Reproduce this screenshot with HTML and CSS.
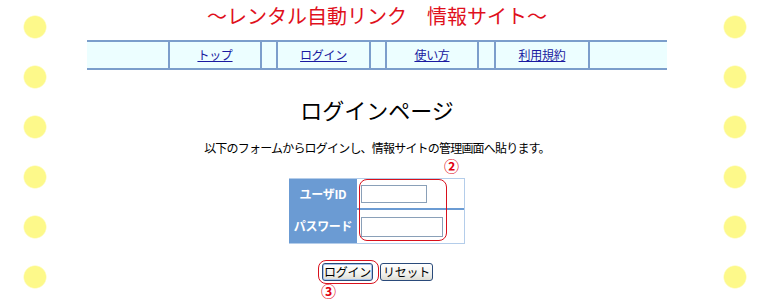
FILE: index.html
```html
<!DOCTYPE html>
<html lang="ja">
<head>
<meta charset="utf-8">
<title>ログインページ</title>
<link rel="stylesheet" href="styles.css">
</head>
<body>
<div class="page">
  <h2 class="site-title">〜レンタル自動リンク　情報サイト〜</h2>
  <nav class="nav">
    <div class="cell c1"></div>
    <div class="cell c2 sep"><a href="#">トップ</a></div>
    <div class="cell gap sep"></div>
    <div class="cell c3 sep"><a href="#">ログイン</a></div>
    <div class="cell gap sep"></div>
    <div class="cell c4 sep"><a href="#">使い方</a></div>
    <div class="cell gap2 sep"></div>
    <div class="cell c5 sep"><a href="#">利用規約</a></div>
    <div class="cell c6 sep"></div>
  </nav>
  <h1 class="page-title">ログインページ</h1>
  <p class="lead">以下のフォームからログインし、情報サイトの管理画面へ貼ります。</p>
  <form class="form">
    <div class="form-area">
      <div class="form-table">
        <div class="th th1">ユーザID</div>
        <div class="td td1"><input class="in in1" type="text"></div>
        <div class="th th2">パスワード</div>
        <div class="td td2"><input class="in in2" type="password"></div>
      </div>
      <span class="mark-box mark-inputs"></span>
      <span class="num num2">②</span>
    </div>
    <div class="buttons">
      <span class="btn-wrap">
        <button type="button" class="btn btn-login">ログイン</button>
        <span class="mark-box mark-btn"></span>
        <span class="num num3">③</span>
      </span>
      <button type="reset" class="btn btn-reset">リセット</button>
    </div>
  </form>
</div>
</body>
</html>
```

FILE: styles.css
```css
html, body {
  margin: 0;
  padding: 0;
}
body {
  min-height: 300px;
  font-family: "Noto Sans CJK JP", "Noto Sans", sans-serif;
  font-size: 12px;
  color: #000;
  background-color: #fff;
  background-image:
    radial-gradient(circle at 35px 25px, #fdf98a 0, #fdf98a 10.5px, rgba(253,249,138,0) 12px),
    radial-gradient(circle at 35px 25px, #fdf98a 0, #fdf98a 10.5px, rgba(253,249,138,0) 12px);
  background-size: 70px 50px, 70px 50px;
  background-position: 0 2px, 700px 2px;
  background-repeat: repeat-y, repeat-y;
}
.page {
  width: 580px;
  margin-left: 87px;
}
.site-title {
  margin: 0;
  padding-top: 5px;
  font-size: 20px;
  line-height: 22px;
  font-weight: normal;
  color: #e0101c;
  text-align: center;
}
.nav {
  display: flex;
  margin-top: 13px;
  height: 26px;
  border-top: 2px solid #7b9ecb;
  border-bottom: 2px solid #7b9ecb;
  background: #ecfeff;
}
.cell {
  box-sizing: border-box;
  display: flex;
  align-items: center;
  justify-content: center;
}
.sep { border-left: 2px solid #7b9ecb; }
.c1 { width: 81px; }
.c2 { width: 92px; }
.gap { width: 16px; }
.gap2 { width: 17px; }
.c3 { width: 93px; }
.c4 { width: 92px; }
.c5 { width: 94px; }
.c6 { width: 79px; }
.nav a {
  color: #1a1aa0;
  text-decoration: underline;
  font-size: 12px;
  line-height: 14px;
  letter-spacing: -0.3px;
}
.page-title {
  margin: 25px 0 0;
  font-size: 22px;
  line-height: 28px;
  font-weight: normal;
  text-align: center;
  color: #000;
}
.lead {
  margin: 17px 0 0;
  font-size: 12px;
  line-height: 16px;
  letter-spacing: -0.8px;
  text-align: center;
}
.form {
  margin: 22px 0 0;
}
.form-area {
  position: relative;
  width: 176px;
  margin: 0 auto;
}
.form-table {
  box-sizing: border-box;
  display: grid;
  grid-template-columns: 68px 107px;
  grid-template-rows: 29px 35px;
  border: 1px solid #b4cdea;
  border-left: 0;
  width: 176px;
}
.th {
  background: #6b9bd3;
  color: #fff;
  font-weight: bold;
  font-size: 12px;
  letter-spacing: -0.3px;
  display: flex;
  align-items: center;
  justify-content: center;
}
.td {
  box-sizing: border-box;
  display: flex;
  align-items: center;
  padding-left: 4px;
  background: #fff;
}
.td2 {
  border-top: 2px solid #6b9bd3;
}
.in {
  box-sizing: border-box;
  border: 1px solid #8aa0b8;
  margin: 0;
  padding: 0 2px;
  font-size: 12px;
  background: #fff;
}
.in1 { width: 66px; height: 18px; }
.in2 { width: 82px; height: 20px; }
.mark-box {
  position: absolute;
  border: 1px solid #d8101c;
  border-radius: 8px;
  pointer-events: none;
}
.mark-inputs {
  left: 70px;
  top: 1px;
  width: 86px;
  height: 60px;
}
.num {
  position: absolute;
  color: #e00010;
  font-weight: bold;
  font-size: 15px;
  line-height: 14px;
}
.num2 {
  left: 155px;
  top: -19px;
}
.buttons {
  display: flex;
  justify-content: center;
  gap: 7px;
  margin-top: 19px;
  padding-left: 1px;
}
.btn-wrap {
  position: relative;
  display: inline-flex;
}
.btn {
  box-sizing: border-box;
  height: 18px;
  margin: 0;
  padding: 0;
  font-family: "Noto Sans CJK JP", "Noto Sans", sans-serif;
  font-size: 12px;
  line-height: 14px;
  letter-spacing: -0.3px;
  color: #000;
  border: 1px solid #2a4a7a;
  border-radius: 3px;
  background: linear-gradient(#ffffff, #f2f2ee 60%, #dcdcd4);
}
.btn-login {
  width: 51px;
  box-shadow: inset 0 0 0 1px #a8c4ee;
}
.btn-reset {
  width: 53px;
}
.mark-btn {
  left: -4px;
  top: -3px;
  width: 59px;
  height: 22px;
}
.num3 {
  left: -1px;
  top: 21px;
}
```
